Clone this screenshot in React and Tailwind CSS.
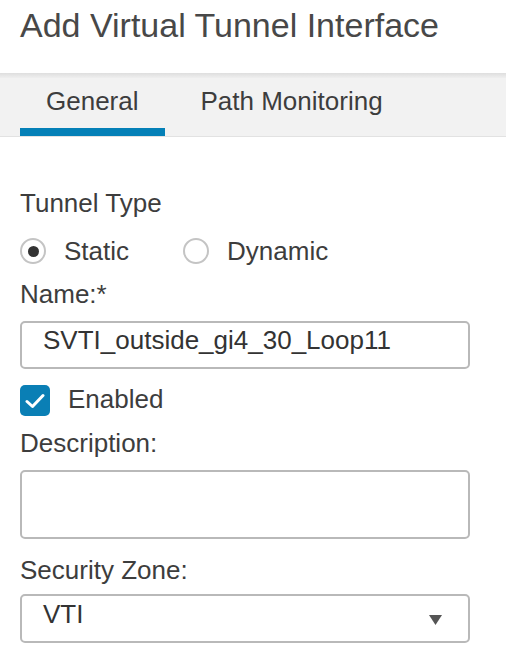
import React, { useState } from 'react';

const Radio = ({ checked, label, onClick }) => (
    <button type="button" onClick={onClick} className="flex items-center">
        <span className="w-[26px] h-[26px] rounded-full border-2 border-[#c4c4c4] bg-white flex items-center justify-center">
            {checked && <span className="w-[11px] h-[11px] rounded-full bg-[#333]" />}
        </span>
        <span className="ml-[18px] text-[26px] leading-[28px] text-[#3d3d3d]">{label}</span>
    </button>
);

const App = () => {
    const [tab, setTab] = useState('General');
    const [type, setType] = useState('Static');
    const [enabled, setEnabled] = useState(true);

    return (
        <div className="w-[506px] h-[660px] bg-white overflow-hidden font-['Liberation_Sans',Arial,sans-serif]">
            {/* Header */}
            <div className="h-[73px] pt-[7px] pl-[20px]">
                <h1 className="text-[34px] leading-[37px] text-[#484848] font-normal">Add Virtual Tunnel Interface</h1>
            </div>

            {/* Tabs */}
            <div className="h-[5px] bg-gradient-to-b from-[#dedede] to-[#efefef]" />
            <div className="h-[59px] bg-[#f2f2f2] border-b border-[#e2e2e2] flex pl-[20px]">
                {['General', 'Path Monitoring'].map((t, i) => (
                    <button
                        key={t}
                        type="button"
                        onClick={() => setTab(t)}
                        className={`flex flex-col items-center ${i > 0 ? 'ml-[10px]' : ''}`}
                    >
                        <span className="pt-[9px] px-[26px] text-[26px] leading-[28px] text-[#3d3d3d]">{t}</span>
                        <span className={`mt-[13px] h-[8px] w-full ${tab === t ? 'bg-[#0480b7]' : 'bg-transparent'}`} />
                    </button>
                ))}
            </div>

            {/* Form */}
            <div className="px-[20px] pt-[52px] flex flex-col text-[26px] leading-[28px] text-[#3d3d3d]">
                <label>Tunnel Type</label>

                <div className="mt-[20px] flex items-center">
                    <Radio checked={type === 'Static'} label="Static" onClick={() => setType('Static')} />
                    <div className="ml-[54px]">
                        <Radio checked={type === 'Dynamic'} label="Dynamic" onClick={() => setType('Dynamic')} />
                    </div>
                </div>

                <label className="mt-[15px]">Name:*</label>
                <div className="mt-[13px] w-[450px] h-[48px] border-2 border-[#b9b9b9] rounded-[5px] pl-[21px] pt-[3px] text-[#333]">
                    SVTI_outside_gi4_30_Loop11
                </div>

                <button type="button" onClick={() => setEnabled(!enabled)} className="mt-[16px] flex items-start text-left">
                    <span className={`w-[30px] h-[31px] rounded-[5px] flex items-center justify-center ${enabled ? 'bg-[#0a7fb5]' : 'border-2 border-[#b9b9b9] bg-white'}`}>
                        {enabled && (
                            <svg width="20" height="16" viewBox="0 0 20 16" fill="none">
                                <path d="M2 8.5 L7.5 13.5 L18 2.5" stroke="white" strokeWidth="3" strokeLinecap="round" strokeLinejoin="round" />
                            </svg>
                        )}
                    </span>
                    <span className="ml-[18px]">Enabled</span>
                </button>

                <label className="mt-[13px]">Description:</label>
                <div className="mt-[13px] w-[450px] h-[69px] border-2 border-[#b9b9b9] rounded-[5px]" />

                <label className="mt-[17px]">Security Zone:</label>
                <div className="mt-[10px] w-[450px] h-[49px] border-2 border-[#b9b9b9] rounded-[5px] pl-[21px] pt-[4px] pr-[26px] flex items-start justify-between text-[#333]">
                    <span>VTI</span>
                    <svg width="13" height="10" viewBox="0 0 13 10" className="mt-[15px]">
                        <path d="M0 0 H13 L6.5 10 Z" fill="#555" />
                    </svg>
                </div>
            </div>
        </div>
    );
};

export default App;
